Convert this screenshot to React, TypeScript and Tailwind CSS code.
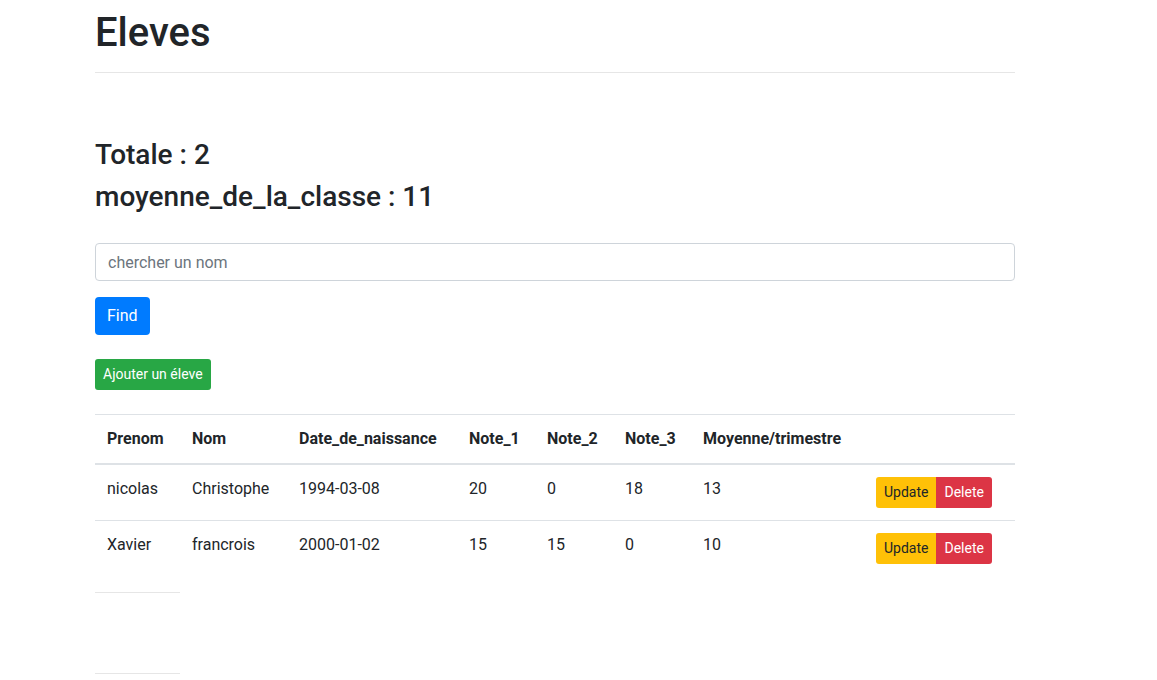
import React from "react";

const eleves = [
  { prenom: "nicolas", nom: "Christophe", date: "1994-03-08", n1: 20, n2: 0, n3: 18, moy: 13 },
  { prenom: "Xavier", nom: "francrois", date: "2000-01-02", n1: 15, n2: 15, n3: 0, moy: 10 },
];

const App = () => {
  return (
    <div className="min-h-[680px] bg-white text-[#212529] font-['Roboto','Liberation_Sans',sans-serif] text-[16px] leading-[24px]">
      <div className="ml-[95px] w-[920px]">
        <h1 className="pt-[9px] text-[40px] leading-[48px] font-medium">Eleves</h1>
        <hr className="mt-[15px] border-0 border-t border-[#e6e6e6]" />

        <h3 className="mt-[65px] mb-2 text-[28px] leading-[33.6px] font-medium">Totale : 2</h3>
        <h3 className="mb-2 text-[28px] leading-[33.6px] font-medium">moyenne_de_la_classe : 11</h3>

        <input
          className="mt-[30px] block w-full h-[38px] px-3 border border-[#ced4da] rounded-[4px] outline-none placeholder:text-[#6c757d]"
          placeholder="chercher un nom"
        />
        <button className="mt-4 block h-[38px] px-3 rounded-[4px] bg-[#007bff] text-white">Find</button>

        <button className="mt-6 block h-[31px] px-2 rounded-[3px] bg-[#28a745] text-white text-[14px] leading-[21px]">
          Ajouter un éleve
        </button>

        <table className="mt-6 w-full table-fixed border-collapse">
          <colgroup>
            <col className="w-[85px]" />
            <col className="w-[107px]" />
            <col className="w-[170px]" />
            <col className="w-[78px]" />
            <col className="w-[78px]" />
            <col className="w-[78px]" />
            <col className="w-[173px]" />
            <col className="w-[151px]" />
          </colgroup>
          <thead>
            <tr className="border-t border-[#dee2e6] border-b-2">
              {["Prenom", "Nom", "Date_de_naissance", "Note_1", "Note_2", "Note_3", "Moyenne/trimestre", ""].map((h, i) => (
                <th key={i} className="p-3 text-left font-bold align-bottom border-b-2 border-[#dee2e6] whitespace-nowrap">
                  {h}
                </th>
              ))}
            </tr>
          </thead>
          <tbody>
            {eleves.map((e, i) => (
              <tr key={i} className="border-t border-[#dee2e6]">
                <td className="p-3 align-top">{e.prenom}</td>
                <td className="p-3 align-top">{e.nom}</td>
                <td className="p-3 align-top">{e.date}</td>
                <td className="p-3 align-top">{e.n1}</td>
                <td className="p-3 align-top">{e.n2}</td>
                <td className="p-3 align-top">{e.n3}</td>
                <td className="p-3 align-top">{e.moy}</td>
                <td className="p-3 align-top">
                  <div className="flex">
                    <button className="h-[31px] px-2 rounded-l-[3px] bg-[#ffc107] text-[#212529] text-[14px] leading-[21px]">Update</button>
                    <button className="h-[31px] px-2 rounded-r-[3px] bg-[#dc3545] text-white text-[14px] leading-[21px]">Delete</button>
                  </div>
                </td>
              </tr>
            ))}
          </tbody>
        </table>

        <div className="mt-4 w-[85px] border-t border-[#e6e6e6]" />
        <div className="mt-[80px] w-[85px] border-t border-[#e6e6e6]" />
      </div>
    </div>
  );
};

export default App;
